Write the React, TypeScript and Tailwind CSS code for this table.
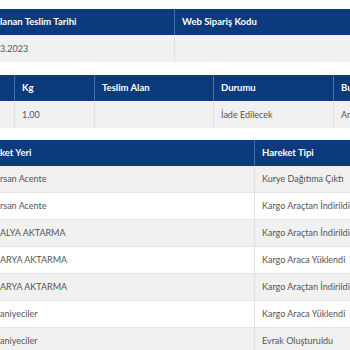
const navy = "bg-[#0b3a7d]";

function Th({ children, className = "" }: { children?: React.ReactNode; className?: string }) {
  return (
    <div
      className={`flex h-[26px] shrink-0 items-center overflow-hidden whitespace-nowrap border-l border-[#4d6fa3] px-[7px] text-[9.5px] font-bold text-white ${className}`}
    >
      {children}
    </div>
  );
}

function Td({ children, className = "" }: { children?: React.ReactNode; className?: string }) {
  return (
    <div
      className={`flex shrink-0 items-center overflow-hidden whitespace-nowrap border-l border-[#e2e2e2] px-[7px] text-[9px] text-[#555] ${className}`}
    >
      {children}
    </div>
  );
}

const moves = [
  ["rsan Acente", "Kurye Dağıtıma Çıktı"],
  ["rsan Acente", "Kargo Araçtan İndirildi"],
  ["ALYA AKTARMA", "Kargo Araçtan İndirildi"],
  ["ARYA AKTARMA", "Kargo Araca Yüklendi"],
  ["ARYA AKTARMA", "Kargo Araçtan İndirildi"],
  ["aniyeciler", "Kargo Araca Yüklendi"],
  ["aniyeciler", "Evrak Oluşturuldu"],
];

export default function App() {
  return (
    <div className="h-[350px] w-[350px] overflow-hidden bg-white pt-[9px] font-['Lato',sans-serif]">
      {/* teslim bilgisi */}
      <div className="w-[420px]">
        <div className={`flex ${navy}`}>
          <Th className="w-[174px] border-l-0 pl-0">lanan Teslim Tarihi</Th>
          <Th className="w-[246px]">Web Sipariş Kodu</Th>
        </div>
        <div className="flex h-[27px] bg-[#f1f1f1]">
          <Td className="w-[174px] border-l-0 pl-0">3.2023</Td>
          <Td className="w-[246px]" />
        </div>
      </div>

      {/* gönderi özeti */}
      <div className="mt-[13px] w-[420px]">
        <div className={`flex ${navy}`}>
          <Th className="w-[14px] border-l-0 px-0" />
          <Th className="w-[80px]">Kg</Th>
          <Th className="w-[119px]">Teslim Alan</Th>
          <Th className="w-[120px]">Durumu</Th>
          <Th className="w-[87px]">Bulunduğu Şube</Th>
        </div>
        <div className="flex h-[27px] bg-[#f1f1f1]">
          <Td className="w-[14px] border-l-0 px-0" />
          <Td className="w-[80px]">1,00</Td>
          <Td className="w-[119px]" />
          <Td className="w-[120px]">İade Edilecek</Td>
          <Td className="w-[87px]">Antalya</Td>
        </div>
      </div>

      {/* hareket geçmişi */}
      <div className="mt-[12px] w-[420px]">
        <div className={`flex ${navy}`}>
          <Th className="w-[254px] border-l-0 pl-0">ket Yeri</Th>
          <Th className="w-[166px]">Hareket Tipi</Th>
        </div>
        {moves.map(([place, type], i) => (
          <div
            key={i}
            className={`flex h-[27px] border-b border-[#e4e4e4] ${i % 2 === 0 ? "bg-[#f1f1f1]" : "bg-white"}`}
          >
            <Td className="w-[254px] border-l-0 pl-0">{place}</Td>
            <Td className="w-[166px]">{type}</Td>
          </div>
        ))}
      </div>
    </div>
  );
}
